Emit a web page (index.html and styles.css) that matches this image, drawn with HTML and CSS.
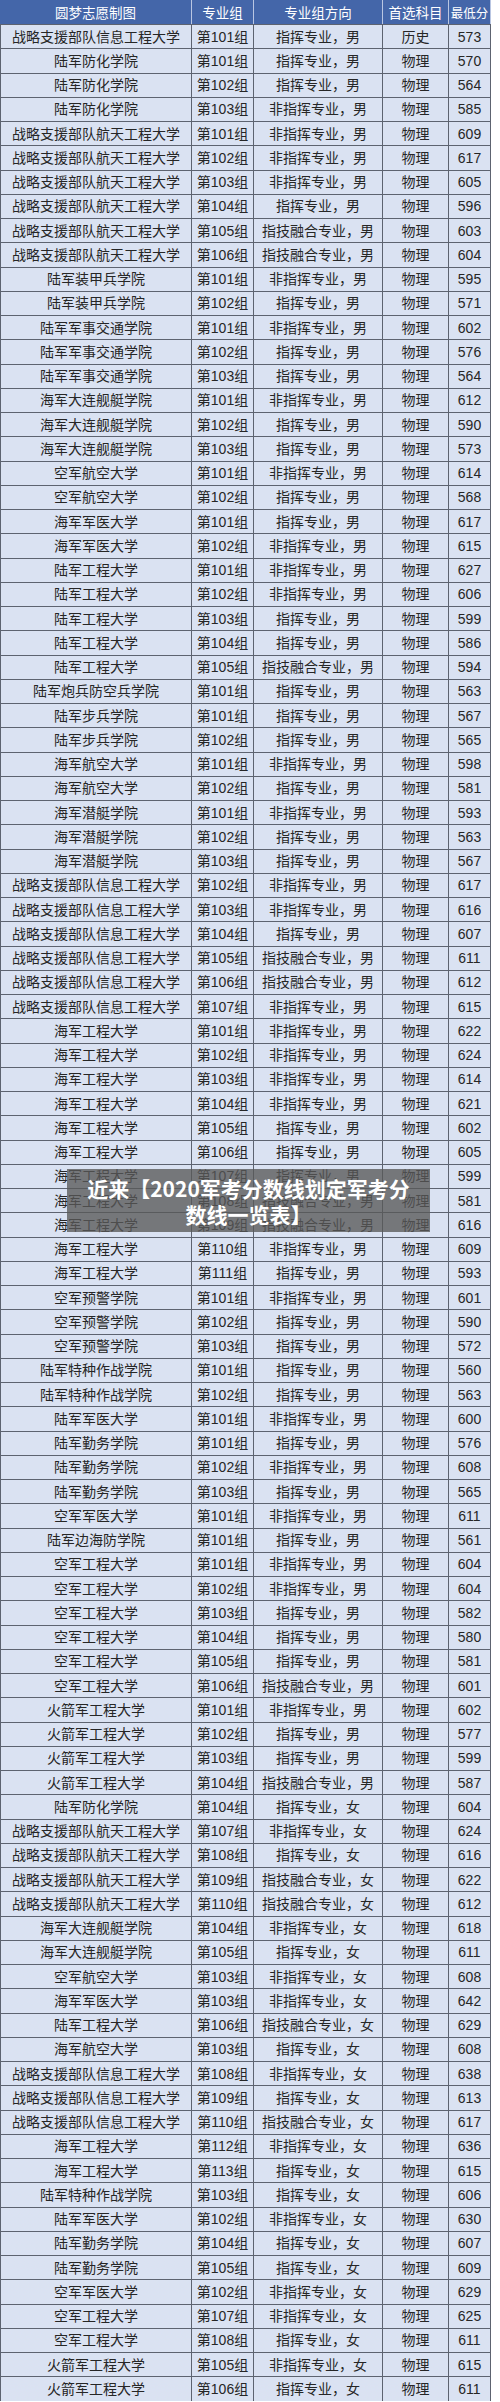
FILE: index.html
```html
<!DOCTYPE html>
<html lang="zh-CN">
<head>
<meta charset="utf-8">
<title>2020军考分数线一览表</title>
<link rel="stylesheet" href="styles.css">
</head>
<body>
<div class="page">
  <div class="sheet">
    <div class="head">
      <span>圆梦志愿制图</span><span>专业组</span><span>专业组方向</span><span>首选科目</span><span class="narrow">最低分</span>
    </div>
    <div class="body">
      <div class="row"><span>战略支援部队信息工程大学</span><span>第101组</span><span>指挥专业，男</span><span>历史</span><span>573</span></div>
      <div class="row"><span>陆军防化学院</span><span>第101组</span><span>指挥专业，男</span><span>物理</span><span>570</span></div>
      <div class="row"><span>陆军防化学院</span><span>第102组</span><span>指挥专业，男</span><span>物理</span><span>564</span></div>
      <div class="row"><span>陆军防化学院</span><span>第103组</span><span>非指挥专业，男</span><span>物理</span><span>585</span></div>
      <div class="row"><span>战略支援部队航天工程大学</span><span>第101组</span><span>非指挥专业，男</span><span>物理</span><span>609</span></div>
      <div class="row"><span>战略支援部队航天工程大学</span><span>第102组</span><span>非指挥专业，男</span><span>物理</span><span>617</span></div>
      <div class="row"><span>战略支援部队航天工程大学</span><span>第103组</span><span>非指挥专业，男</span><span>物理</span><span>605</span></div>
      <div class="row"><span>战略支援部队航天工程大学</span><span>第104组</span><span>指挥专业，男</span><span>物理</span><span>596</span></div>
      <div class="row"><span>战略支援部队航天工程大学</span><span>第105组</span><span>指技融合专业，男</span><span>物理</span><span>603</span></div>
      <div class="row"><span>战略支援部队航天工程大学</span><span>第106组</span><span>指技融合专业，男</span><span>物理</span><span>604</span></div>
      <div class="row"><span>陆军装甲兵学院</span><span>第101组</span><span>非指挥专业，男</span><span>物理</span><span>595</span></div>
      <div class="row"><span>陆军装甲兵学院</span><span>第102组</span><span>指挥专业，男</span><span>物理</span><span>571</span></div>
      <div class="row"><span>陆军军事交通学院</span><span>第101组</span><span>非指挥专业，男</span><span>物理</span><span>602</span></div>
      <div class="row"><span>陆军军事交通学院</span><span>第102组</span><span>指挥专业，男</span><span>物理</span><span>576</span></div>
      <div class="row"><span>陆军军事交通学院</span><span>第103组</span><span>指挥专业，男</span><span>物理</span><span>564</span></div>
      <div class="row"><span>海军大连舰艇学院</span><span>第101组</span><span>非指挥专业，男</span><span>物理</span><span>612</span></div>
      <div class="row"><span>海军大连舰艇学院</span><span>第102组</span><span>指挥专业，男</span><span>物理</span><span>590</span></div>
      <div class="row"><span>海军大连舰艇学院</span><span>第103组</span><span>指挥专业，男</span><span>物理</span><span>573</span></div>
      <div class="row"><span>空军航空大学</span><span>第101组</span><span>非指挥专业，男</span><span>物理</span><span>614</span></div>
      <div class="row"><span>空军航空大学</span><span>第102组</span><span>指挥专业，男</span><span>物理</span><span>568</span></div>
      <div class="row"><span>海军军医大学</span><span>第101组</span><span>指挥专业，男</span><span>物理</span><span>617</span></div>
      <div class="row"><span>海军军医大学</span><span>第102组</span><span>非指挥专业，男</span><span>物理</span><span>615</span></div>
      <div class="row"><span>陆军工程大学</span><span>第101组</span><span>非指挥专业，男</span><span>物理</span><span>627</span></div>
      <div class="row"><span>陆军工程大学</span><span>第102组</span><span>非指挥专业，男</span><span>物理</span><span>606</span></div>
      <div class="row"><span>陆军工程大学</span><span>第103组</span><span>指挥专业，男</span><span>物理</span><span>599</span></div>
      <div class="row"><span>陆军工程大学</span><span>第104组</span><span>指挥专业，男</span><span>物理</span><span>586</span></div>
      <div class="row"><span>陆军工程大学</span><span>第105组</span><span>指技融合专业，男</span><span>物理</span><span>594</span></div>
      <div class="row"><span>陆军炮兵防空兵学院</span><span>第101组</span><span>指挥专业，男</span><span>物理</span><span>563</span></div>
      <div class="row"><span>陆军步兵学院</span><span>第101组</span><span>指挥专业，男</span><span>物理</span><span>567</span></div>
      <div class="row"><span>陆军步兵学院</span><span>第102组</span><span>指挥专业，男</span><span>物理</span><span>565</span></div>
      <div class="row"><span>海军航空大学</span><span>第101组</span><span>非指挥专业，男</span><span>物理</span><span>598</span></div>
      <div class="row"><span>海军航空大学</span><span>第102组</span><span>指挥专业，男</span><span>物理</span><span>581</span></div>
      <div class="row"><span>海军潜艇学院</span><span>第101组</span><span>非指挥专业，男</span><span>物理</span><span>593</span></div>
      <div class="row"><span>海军潜艇学院</span><span>第102组</span><span>指挥专业，男</span><span>物理</span><span>563</span></div>
      <div class="row"><span>海军潜艇学院</span><span>第103组</span><span>指挥专业，男</span><span>物理</span><span>567</span></div>
      <div class="row"><span>战略支援部队信息工程大学</span><span>第102组</span><span>非指挥专业，男</span><span>物理</span><span>617</span></div>
      <div class="row"><span>战略支援部队信息工程大学</span><span>第103组</span><span>非指挥专业，男</span><span>物理</span><span>616</span></div>
      <div class="row"><span>战略支援部队信息工程大学</span><span>第104组</span><span>指挥专业，男</span><span>物理</span><span>607</span></div>
      <div class="row"><span>战略支援部队信息工程大学</span><span>第105组</span><span>指技融合专业，男</span><span>物理</span><span>611</span></div>
      <div class="row"><span>战略支援部队信息工程大学</span><span>第106组</span><span>指技融合专业，男</span><span>物理</span><span>612</span></div>
      <div class="row"><span>战略支援部队信息工程大学</span><span>第107组</span><span>非指挥专业，男</span><span>物理</span><span>615</span></div>
      <div class="row"><span>海军工程大学</span><span>第101组</span><span>非指挥专业，男</span><span>物理</span><span>622</span></div>
      <div class="row"><span>海军工程大学</span><span>第102组</span><span>非指挥专业，男</span><span>物理</span><span>624</span></div>
      <div class="row"><span>海军工程大学</span><span>第103组</span><span>非指挥专业，男</span><span>物理</span><span>614</span></div>
      <div class="row"><span>海军工程大学</span><span>第104组</span><span>非指挥专业，男</span><span>物理</span><span>621</span></div>
      <div class="row"><span>海军工程大学</span><span>第105组</span><span>指挥专业，男</span><span>物理</span><span>602</span></div>
      <div class="row"><span>海军工程大学</span><span>第106组</span><span>指挥专业，男</span><span>物理</span><span>605</span></div>
      <div class="row"><span>海军工程大学</span><span>第107组</span><span>指挥专业，男</span><span>物理</span><span>599</span></div>
      <div class="row"><span>海军工程大学</span><span>第108组</span><span>指技融合专业，男</span><span>物理</span><span>581</span></div>
      <div class="row"><span>海军工程大学</span><span>第109组</span><span>指技融合专业，男</span><span>物理</span><span>616</span></div>
      <div class="row"><span>海军工程大学</span><span>第110组</span><span>非指挥专业，男</span><span>物理</span><span>609</span></div>
      <div class="row"><span>海军工程大学</span><span>第111组</span><span>指挥专业，男</span><span>物理</span><span>593</span></div>
      <div class="row"><span>空军预警学院</span><span>第101组</span><span>非指挥专业，男</span><span>物理</span><span>601</span></div>
      <div class="row"><span>空军预警学院</span><span>第102组</span><span>指挥专业，男</span><span>物理</span><span>590</span></div>
      <div class="row"><span>空军预警学院</span><span>第103组</span><span>指挥专业，男</span><span>物理</span><span>572</span></div>
      <div class="row"><span>陆军特种作战学院</span><span>第101组</span><span>指挥专业，男</span><span>物理</span><span>560</span></div>
      <div class="row"><span>陆军特种作战学院</span><span>第102组</span><span>指挥专业，男</span><span>物理</span><span>563</span></div>
      <div class="row"><span>陆军军医大学</span><span>第101组</span><span>非指挥专业，男</span><span>物理</span><span>600</span></div>
      <div class="row"><span>陆军勤务学院</span><span>第101组</span><span>指挥专业，男</span><span>物理</span><span>576</span></div>
      <div class="row"><span>陆军勤务学院</span><span>第102组</span><span>非指挥专业，男</span><span>物理</span><span>608</span></div>
      <div class="row"><span>陆军勤务学院</span><span>第103组</span><span>指挥专业，男</span><span>物理</span><span>565</span></div>
      <div class="row"><span>空军军医大学</span><span>第101组</span><span>非指挥专业，男</span><span>物理</span><span>611</span></div>
      <div class="row"><span>陆军边海防学院</span><span>第101组</span><span>指挥专业，男</span><span>物理</span><span>561</span></div>
      <div class="row"><span>空军工程大学</span><span>第101组</span><span>非指挥专业，男</span><span>物理</span><span>604</span></div>
      <div class="row"><span>空军工程大学</span><span>第102组</span><span>非指挥专业，男</span><span>物理</span><span>604</span></div>
      <div class="row"><span>空军工程大学</span><span>第103组</span><span>指挥专业，男</span><span>物理</span><span>582</span></div>
      <div class="row"><span>空军工程大学</span><span>第104组</span><span>指挥专业，男</span><span>物理</span><span>580</span></div>
      <div class="row"><span>空军工程大学</span><span>第105组</span><span>指挥专业，男</span><span>物理</span><span>581</span></div>
      <div class="row"><span>空军工程大学</span><span>第106组</span><span>指技融合专业，男</span><span>物理</span><span>601</span></div>
      <div class="row"><span>火箭军工程大学</span><span>第101组</span><span>非指挥专业，男</span><span>物理</span><span>602</span></div>
      <div class="row"><span>火箭军工程大学</span><span>第102组</span><span>指挥专业，男</span><span>物理</span><span>577</span></div>
      <div class="row"><span>火箭军工程大学</span><span>第103组</span><span>指挥专业，男</span><span>物理</span><span>599</span></div>
      <div class="row"><span>火箭军工程大学</span><span>第104组</span><span>指技融合专业，男</span><span>物理</span><span>587</span></div>
      <div class="row"><span>陆军防化学院</span><span>第104组</span><span>指挥专业，女</span><span>物理</span><span>604</span></div>
      <div class="row"><span>战略支援部队航天工程大学</span><span>第107组</span><span>非指挥专业，女</span><span>物理</span><span>624</span></div>
      <div class="row"><span>战略支援部队航天工程大学</span><span>第108组</span><span>指挥专业，女</span><span>物理</span><span>616</span></div>
      <div class="row"><span>战略支援部队航天工程大学</span><span>第109组</span><span>指技融合专业，女</span><span>物理</span><span>622</span></div>
      <div class="row"><span>战略支援部队航天工程大学</span><span>第110组</span><span>指技融合专业，女</span><span>物理</span><span>612</span></div>
      <div class="row"><span>海军大连舰艇学院</span><span>第104组</span><span>非指挥专业，女</span><span>物理</span><span>618</span></div>
      <div class="row"><span>海军大连舰艇学院</span><span>第105组</span><span>指挥专业，女</span><span>物理</span><span>611</span></div>
      <div class="row"><span>空军航空大学</span><span>第103组</span><span>非指挥专业，女</span><span>物理</span><span>608</span></div>
      <div class="row"><span>海军军医大学</span><span>第103组</span><span>非指挥专业，女</span><span>物理</span><span>642</span></div>
      <div class="row"><span>陆军工程大学</span><span>第106组</span><span>指技融合专业，女</span><span>物理</span><span>629</span></div>
      <div class="row"><span>海军航空大学</span><span>第103组</span><span>指挥专业，女</span><span>物理</span><span>608</span></div>
      <div class="row"><span>战略支援部队信息工程大学</span><span>第108组</span><span>非指挥专业，女</span><span>物理</span><span>638</span></div>
      <div class="row"><span>战略支援部队信息工程大学</span><span>第109组</span><span>指挥专业，女</span><span>物理</span><span>613</span></div>
      <div class="row"><span>战略支援部队信息工程大学</span><span>第110组</span><span>指技融合专业，女</span><span>物理</span><span>617</span></div>
      <div class="row"><span>海军工程大学</span><span>第112组</span><span>非指挥专业，女</span><span>物理</span><span>636</span></div>
      <div class="row"><span>海军工程大学</span><span>第113组</span><span>指挥专业，女</span><span>物理</span><span>615</span></div>
      <div class="row"><span>陆军特种作战学院</span><span>第103组</span><span>指挥专业，女</span><span>物理</span><span>606</span></div>
      <div class="row"><span>陆军军医大学</span><span>第102组</span><span>非指挥专业，女</span><span>物理</span><span>630</span></div>
      <div class="row"><span>陆军勤务学院</span><span>第104组</span><span>指挥专业，女</span><span>物理</span><span>607</span></div>
      <div class="row"><span>陆军勤务学院</span><span>第105组</span><span>指挥专业，女</span><span>物理</span><span>609</span></div>
      <div class="row"><span>空军军医大学</span><span>第102组</span><span>非指挥专业，女</span><span>物理</span><span>629</span></div>
      <div class="row"><span>空军工程大学</span><span>第107组</span><span>非指挥专业，女</span><span>物理</span><span>625</span></div>
      <div class="row"><span>空军工程大学</span><span>第108组</span><span>指挥专业，女</span><span>物理</span><span>611</span></div>
      <div class="row"><span>火箭军工程大学</span><span>第105组</span><span>非指挥专业，女</span><span>物理</span><span>615</span></div>
      <div class="row"><span>火箭军工程大学</span><span>第106组</span><span>指挥专业，女</span><span>物理</span><span>611</span></div>
    </div>
  </div>
  <div class="caption">近来【2020军考分数线划定军考分<br>数线一览表】</div>
</div>
</body>
</html>
```

FILE: styles.css
```css
html, body {
  margin: 0;
  padding: 0;
  background: #ffffff;
}

body {
  width: 500px;
  font-family: "Liberation Sans", "Noto Sans CJK SC", sans-serif;
  font-size: 14px;
  color: #262626;
}

.page {
  position: relative;
  width: 500px;
  height: 2402px;
  overflow: hidden;
}

.sheet {
  width: 491px;
}

.head {
  display: grid;
  grid-template-columns: 191px 61px 128px 65px 41px;
  column-gap: 1px;
  height: 24px;
  padding-right: 1px;
  background: #b9c6e2;
}

.head span {
  display: flex;
  align-items: center;
  justify-content: center;
  background: #4466a9;
  color: #ffffff;
  font-family: "Noto Sans CJK SC", sans-serif;
  font-size: 13.5px;
  white-space: nowrap;
  overflow: hidden;
}

.head .narrow {
  font-size: 12.5px;
}

.body {
  display: flex;
  flex-direction: column;
  gap: 1px;
  padding: 1px 1px 0;
  background: #5d6370;
}

.row {
  display: grid;
  grid-template-columns: 190px 61px 128px 65px 41px;
  column-gap: 1px;
  height: 23.265px;
}

.row span {
  display: flex;
  align-items: center;
  justify-content: center;
  background: #dae2f2;
  white-space: nowrap;
  line-height: 1;
}

.caption {
  position: absolute;
  left: 67px;
  top: 1169px;
  width: 363px;
  height: 63px;
  display: flex;
  align-items: center;
  justify-content: center;
  text-align: center;
  background: rgba(88, 88, 88, 0.78);
  color: #ffffff;
  font-family: "Noto Sans CJK SC", sans-serif;
  font-weight: 700;
  font-size: 21px;
  line-height: 26px;
}
```
